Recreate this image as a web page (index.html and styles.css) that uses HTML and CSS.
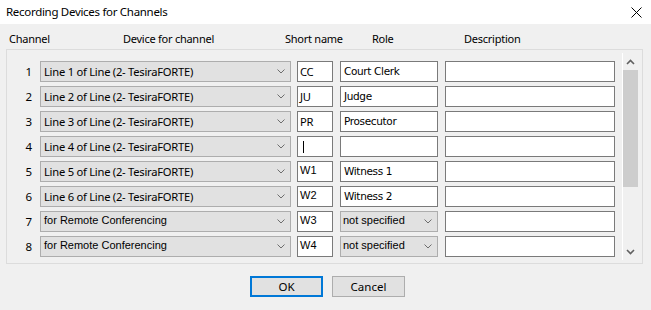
FILE: index.html
```html
<!DOCTYPE html>
<html>
<head>
<meta charset="utf-8">
<link rel="stylesheet" href="styles.css">
</head>
<body>
<div class="dialog">
  <div class="titlebar">
    <span class="title">Recording Devices for Channels</span>
    <svg class="close" width="11" height="11" viewBox="0 0 11 11"><path d="M0.5 0.5 L10.5 10.5 M10.5 0.5 L0.5 10.5" stroke="#000" stroke-width="1" fill="none"/></svg>
  </div>
  <div class="headers">
    <span class="h h-channel">Channel</span>
    <span class="h h-device">Device for channel</span>
    <span class="h h-short">Short name</span>
    <span class="h h-role">Role</span>
    <span class="h h-desc">Description</span>
  </div>
  <div class="panel">
    <div class="list">
      <div class="row">
        <span class="num">1</span>
        <div class="combo device"><span class="seg">Line 1 of Line (2- TesiraFORTE)</span><svg class="chev" width="8" height="5" viewBox="0 0 8 5"><path d="M0.5 0.5 L4 4 L7.5 0.5" stroke="#6d6d6d" fill="none"/></svg></div>
        <div class="edit short"><span class="seg">CC</span></div>
        <div class="edit role"><span class="tah">Court Clerk</span></div>
        <div class="edit desc"></div>
      </div>
      <div class="row">
        <span class="num">2</span>
        <div class="combo device"><span class="seg">Line 2 of Line (2- TesiraFORTE)</span><svg class="chev" width="8" height="5" viewBox="0 0 8 5"><path d="M0.5 0.5 L4 4 L7.5 0.5" stroke="#6d6d6d" fill="none"/></svg></div>
        <div class="edit short"><span class="seg">JU</span></div>
        <div class="edit role"><span class="tah">Judge</span></div>
        <div class="edit desc"></div>
      </div>
      <div class="row">
        <span class="num">3</span>
        <div class="combo device"><span class="seg">Line 3 of Line (2- TesiraFORTE)</span><svg class="chev" width="8" height="5" viewBox="0 0 8 5"><path d="M0.5 0.5 L4 4 L7.5 0.5" stroke="#6d6d6d" fill="none"/></svg></div>
        <div class="edit short"><span class="seg">PR</span></div>
        <div class="edit role"><span class="tah">Prosecutor</span></div>
        <div class="edit desc"></div>
      </div>
      <div class="row">
        <span class="num">4</span>
        <div class="combo device"><span class="seg">Line 4 of Line (2- TesiraFORTE)</span><svg class="chev" width="8" height="5" viewBox="0 0 8 5"><path d="M0.5 0.5 L4 4 L7.5 0.5" stroke="#6d6d6d" fill="none"/></svg></div>
        <div class="edit short"><span class="caret"></span></div>
        <div class="edit role"></div>
        <div class="edit desc"></div>
      </div>
      <div class="row">
        <span class="num">5</span>
        <div class="combo device"><span class="seg">Line 5 of Line (2- TesiraFORTE)</span><svg class="chev" width="8" height="5" viewBox="0 0 8 5"><path d="M0.5 0.5 L4 4 L7.5 0.5" stroke="#6d6d6d" fill="none"/></svg></div>
        <div class="edit short"><span class="sans">W1</span></div>
        <div class="edit role"><span class="tah">Witness 1</span></div>
        <div class="edit desc"></div>
      </div>
      <div class="row">
        <span class="num">6</span>
        <div class="combo device"><span class="seg">Line 6 of Line (2- TesiraFORTE)</span><svg class="chev" width="8" height="5" viewBox="0 0 8 5"><path d="M0.5 0.5 L4 4 L7.5 0.5" stroke="#6d6d6d" fill="none"/></svg></div>
        <div class="edit short"><span class="sans">W2</span></div>
        <div class="edit role"><span class="tah">Witness 2</span></div>
        <div class="edit desc"></div>
      </div>
      <div class="row">
        <span class="num">7</span>
        <div class="combo device"><span class="sans">for Remote Conferencing</span><svg class="chev" width="8" height="5" viewBox="0 0 8 5"><path d="M0.5 0.5 L4 4 L7.5 0.5" stroke="#6d6d6d" fill="none"/></svg></div>
        <div class="edit short"><span class="sans">W3</span></div>
        <div class="combo role"><span class="sans">not specified</span><svg class="chev" width="8" height="5" viewBox="0 0 8 5"><path d="M0.5 0.5 L4 4 L7.5 0.5" stroke="#6d6d6d" fill="none"/></svg></div>
        <div class="edit desc"></div>
      </div>
      <div class="row">
        <span class="num">8</span>
        <div class="combo device"><span class="sans">for Remote Conferencing</span><svg class="chev" width="8" height="5" viewBox="0 0 8 5"><path d="M0.5 0.5 L4 4 L7.5 0.5" stroke="#6d6d6d" fill="none"/></svg></div>
        <div class="edit short"><span class="sans">W4</span></div>
        <div class="combo role"><span class="sans">not specified</span><svg class="chev" width="8" height="5" viewBox="0 0 8 5"><path d="M0.5 0.5 L4 4 L7.5 0.5" stroke="#6d6d6d" fill="none"/></svg></div>
        <div class="edit desc"></div>
      </div>
    </div>
    <div class="scrollbar">
      <div class="sb-btn"><svg width="9" height="6" viewBox="0 0 9 6"><path d="M1 5 L4.5 1.5 L8 5" stroke="#606060" stroke-width="1.6" fill="none"/></svg></div>
      <div class="sb-thumb"></div>
      <div class="sb-track"></div>
      <div class="sb-btn"><svg width="9" height="6" viewBox="0 0 9 6"><path d="M1 1 L4.5 4.5 L8 1" stroke="#606060" stroke-width="1.6" fill="none"/></svg></div>
    </div>
  </div>
  <div class="footer">
    <div class="btn default">OK</div>
    <div class="btn">Cancel</div>
  </div>
</div>
</body>
</html>
```
FILE: styles.css
```css
html, body {
  margin: 0;
  padding: 0;
  background: #f0f0f0;
}
.dialog {
  width: 651px;
  height: 310px;
  background: #f0f0f0;
  font-family: "Noto Sans", "Open Sans", sans-serif;
  font-size: 11px;
  color: #000;
  overflow: hidden;
}
.titlebar {
  height: 24px;
  background: #fff;
  display: flex;
  align-items: center;
  justify-content: space-between;
  padding: 0 9px 0 6px;
}
.title {
  font-size: 11.5px;
  letter-spacing: -0.3px;
  margin-top: -2px;
}
.headers {
  height: 25px;
  display: flex;
  align-items: center;
  padding-top: 4px;
  box-sizing: border-box;
}
.h {
  display: block;
  white-space: nowrap;
  font-size: 11px;
  letter-spacing: -0.25px;
}
.h-channel { margin-left: 9px; width: 114px; }
.h-device { width: 162px; }
.h-short { width: 87px; }
.h-role { width: 92px; }
.panel {
  margin-left: 6px;
  width: 637px;
  height: 215px;
  box-sizing: border-box;
  border: 1px solid #dcdcdc;
  display: flex;
  padding: 3px 3px 3px 0;
}
.list {
  width: 615px;
  padding-top: 8px;
}
.row {
  display: flex;
  align-items: center;
  height: 21px;
  margin-bottom: 4px;
}
.num {
  width: 25px;
  margin-right: 8px;
  text-align: right;
  font-size: 11.5px;
}
.combo, .edit {
  height: 21px;
  box-sizing: border-box;
  display: flex;
  align-items: center;
  white-space: nowrap;
  overflow: hidden;
}
.combo {
  background: #e1e1e1;
  border: 1px solid #adadad;
  padding-left: 3px;
  justify-content: space-between;
  padding-right: 5px;
}
.edit {
  background: #fff;
  border: 1px solid #7a7a7a;
  padding-left: 2px;
}
.device { width: 251px; margin-right: 6px; }
.short { width: 36px; margin-right: 7px; }
.role { width: 98px; margin-right: 7px; }
.desc { width: 170px; }
.role.combo { padding-right: 5px; padding-left: 2px; }
.chev { flex: none; }
.seg {
  font-family: "Noto Sans", sans-serif;
  font-size: 11.2px;
  letter-spacing: -0.25px;
  margin-top: -1px;
}
.tah {
  font-family: "DejaVu Sans", sans-serif;
  font-size: 10.5px;
  letter-spacing: -0.35px;
  margin-top: -1px;
  padding-left: 1px;
}
.sans {
  font-family: "Liberation Sans", Arial, sans-serif;
  font-size: 11px;
  margin-top: -3px;
}
.caret {
  display: block;
  width: 1px;
  height: 12px;
  background: #000;
  margin-left: 3px;
}
.scrollbar {
  width: 17px;
  height: 207px;
  box-sizing: border-box;
  border-left: 1px solid #fff;
  display: flex;
  flex-direction: column;
}
.sb-btn {
  height: 17px;
  display: flex;
  align-items: center;
  justify-content: center;
  flex: none;
  padding-right: 1px;
}
.sb-thumb {
  height: 117px;
  width: 15px;
  background: #cdcdcd;
  flex: none;
}
.sb-track { flex: 1; }
.footer {
  display: flex;
  justify-content: center;
  gap: 9px;
  margin-top: 12px;
  padding-left: 4px;
}
.btn {
  width: 73px;
  height: 21px;
  box-sizing: border-box;
  background: #e1e1e1;
  border: 1px solid #adadad;
  display: flex;
  align-items: center;
  justify-content: center;
  font-size: 11.5px;
  padding-bottom: 1px;
}
.btn.default {
  border: 2px solid #0078d7;
}
```
